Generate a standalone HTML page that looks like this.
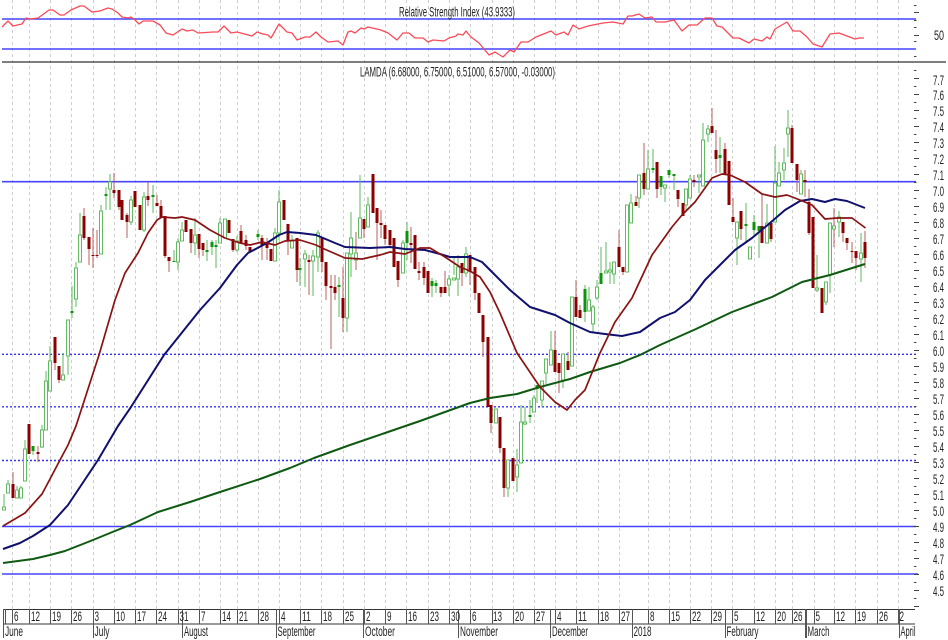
<!DOCTYPE html>
<html lang="en">
<head>
<meta charset="utf-8">
<title>LAMDA chart</title>
<style>
html,body{margin:0;padding:0;background:#fff;width:948px;height:640px;overflow:hidden}
svg{display:block}
text{font-family:"Liberation Sans",Arial,sans-serif;font-size:13.5px;fill:#222}
</style>
</head>
<body>
<svg xmlns="http://www.w3.org/2000/svg" width="948" height="640" viewBox="0 0 948 640">
<rect width="948" height="640" fill="#fff"/>

<!-- vertical dashed grid -->
<path fill="none" stroke="#cfcfcf" stroke-width="1" stroke-dasharray="3 3" d="M12.5 0V609M29.5 0V609M50.5 0V609M71.5 0V609M93.5 0V609M114.5 0V609M135.5 0V609M156.5 0V609M178.5 0V609M199.5 0V609M220.5 0V609M237.5 0V609M258.5 0V609M279.5 0V609M300.5 0V609M321.5 0V609M343.5 0V609M364.5 0V609M385.5 0V609M406.5 0V609M428.5 0V609M449.5 0V609M470.5 0V609M492.5 0V609M513.5 0V609M534.5 0V609M555.5 0V609M576.5 0V609M598.5 0V609M619.5 0V609M648.5 0V609M669.5 0V609M690.5 0V609M711.5 0V609M732.5 0V609M754.5 0V609M775.5 0V609M792.5 0V609M814.5 0V609M834.5 0V609M855.5 0V609M877.5 0V609M898.5 0V609"/>

<!-- horizontal levels -->
<path fill="none" stroke="#4444ff" stroke-width="1.6" d="M2 19H916M2 49H916M2 181.7H916M2 526.5H916M2 574H918"/>
<path fill="none" stroke="#3030ff" stroke-width="1.4" stroke-dasharray="2 2" d="M2 354.3H916M2 406.8H916M2 460.5H916"/>
<path fill="none" stroke="#333" stroke-width="1.3" d="M2 62H946"/>

<!-- RSI -->
<polyline fill="none" stroke="#fb4a58" stroke-width="1.3" stroke-linejoin="round" points="2,27 8,21 13,26 22,24 26,18 30,19 38,18 45,13 49,10 53,10 60,15 64,15 71,10 80,6 84,6 92,12 100,11 108,8 112,9 118,13 122,17 128,18 131,17 135,20 139,24 143,21 153,21 160,25 166,33 173,35 182,29 187,31 193,30 198,33 213,32 218,32 224,26 231,33 237,32 252,36 257,32 263,34 268,35 271,38 279,24 287,32 292,33 297,40 305,37 310,37 316,32 321,37 328,42 338,41 343,45 348,32 351,31 355,33 361,28 364,29 368,27 381,30 388,33 397,40 403,33 409,33 415,38 423,38 428,42 433,40 444,41 449,38 456,36 458,34 463,35 466,31 471,37 479,43 489,55 495,52 503,57 510,50 514,52 521,42 528,42 536,37 551,31 556,35 564,32 568,35 573,25 579,29 588,26 603,23 613,22 623,24 628,16 632,16 639,14 645,18 652,17 656,22 665,22 674,20 682,31 689,25 697,25 705,18 712,18 717,26 722,27 733,38 739,38 749,43 754,39 762,41 767,37 770,39 775,29 787,22 793,31 800,31 807,37 813,44 822,47 830,34 839,33 855,39 859,38 864,38"/>

<!-- wicks -->
<path fill="none" stroke="#5cb85c" stroke-width="1" d="M4 494V510M8 480V493M17 486V498M21 486V498M25 440V481M33 446V455M42 425V448M46 371V430M50 346V391M63 353V380M68 320V375M72 286V318M76 262V307M80 213V262M101 205V254M106 187V210M110 174V210M131 196V225M144 192V232M153 185V213M174 250V262M178 238V270M182 222V241M195 218V255M207 240V261M212 240V255M216 240V268M220 218V243M225 219V238M237 236V252M258 230V240M275 228V261M279 190V240M292 235V248M300 258V286M305 250V287M313 250V296M318 230V272M339 277V317M347 253V332M351 212V277M360 175V238M368 197V227M403 240V273M407 222V260M432 278V297M436 280V293M449 275V296M454 258V275M458 255V296M466 247V277M508 460V497M517 449V492M521 405V463M525 407V425M530 400V423M534 395V412M537 385V403M542 381V407M546 359V384M551 331V365M563 354V388M572 297V366M585 285V322M589 287V311M593 305V332M597 280V300M601 247V284M606 242V273M610 262V284M614 262V284M627 205V272M631 194V223M639 175V208M648 150V189M653 149V173M661 176V195M665 185V202M669 170V178M674 175V190M686 189V210M690 175V198M699 175V193M703 123V186M708 125V142M720 137V173M737 222V265M746 203V243M754 215V235M759 226V258M767 204V243M775 146V222M779 162V186M784 148V180M788 110V157M801 170V194M817 255V292M826 282V305M830 223V293M839 211V237M861 233V282"/>
<path fill="none" stroke="#bb6060" stroke-width="1" d="M13 472V498M38 446V462M55 337V370M59 366V383M84 208V240M89 237V265M93 228V268M97 230V258M114 173V198M119 190V210M127 213V238M148 182V206M157 195V206M161 200V218M165 216V258M169 257V272M191 229V253M199 234V258M203 243V256M233 239V252M241 225V243M246 235V250M262 235V260M267 238V260M288 224V255M297 238V282M309 255V295M322 238V272M326 262V300M331 275V349M335 275V300M343 267V332M356 232V270M364 219V238M377 208V260M381 210V238M385 225V245M390 230V247M398 261V287M411 227V263M415 235V269M419 262V280M424 262V285M428 271V293M441 287V297M445 271V293M462 263V286M470 255V285M475 267V300M483 315V357M491 405V433M500 417V453M504 448V497M555 331V372M559 363V393M568 352V370M576 280V317M580 305V318M619 230V267M623 267V275M636 196V206M644 143V195M657 162V198M678 190V207M683 203V216M694 175V187M712 108V133M716 130V173M725 143V174M733 198V222M741 211V240M762 195V243M771 223V242M792 125V163M797 164V192M805 170V197M809 189V235M834 208V247M843 222V242M847 238V250M852 242V263M856 251V270M865 231V268"/>

<!-- hollow bodies -->
<path fill="#fff" stroke="#62bb62" stroke-width="1" d="M2.5 507h3V510h-3zM6.5 484h3V493h-3zM15.5 490h3V498h-3zM19.5 488h3V498h-3zM23.5 449h3V481h-3zM40.5 430h3V447h-3zM44.5 381h3V430h-3zM48.5 361h3V391h-3zM61.5 375h3V380h-3zM66.5 320h3V356h-3zM74.5 268h3V299h-3zM78.5 235h3V262h-3zM99.5 211h3V254h-3zM108.5 182h3V189h-3zM129.5 200h3V222h-3zM142.5 197h3V230h-3zM176.5 242h3V262h-3zM180.5 230h3V241h-3zM193.5 235h3V243h-3zM218.5 223h3V243h-3zM223.5 219h3V238h-3zM235.5 241h3V250h-3zM273.5 233h3V261h-3zM277.5 202h3V233h-3zM290.5 241h3V248h-3zM303.5 254h3V259h-3zM311.5 256h3V261h-3zM316.5 233h3V257h-3zM345.5 253h3V318h-3zM349.5 238h3V254h-3zM354.5 253h3V260h-3zM358.5 218h3V238h-3zM366.5 205h3V227h-3zM401.5 243h3V273h-3zM447.5 279h3V285h-3zM452.5 278h3V280h-3zM456.5 267h3V279h-3zM464.5 254h3V273h-3zM494.5 409h3V423h-3zM506.5 460h3V488h-3zM515.5 465h3V477h-3zM519.5 422h3V463h-3zM523.5 422h3V424h-3zM532.5 398h3V412h-3zM540.5 381h3V400h-3zM544.5 359h3V373h-3zM549.5 350h3V365h-3zM561.5 354h3V380h-3zM570.5 297h3V366h-3zM587.5 300h3V311h-3zM591.5 307h3V324h-3zM595.5 287h3V298h-3zM604.5 271h3V273h-3zM608.5 270h3V272h-3zM612.5 262h3V274h-3zM625.5 205h3V272h-3zM629.5 203h3V223h-3zM637.5 175h3V198h-3zM646.5 169h3V189h-3zM663.5 185h3V188h-3zM684.5 189h3V205h-3zM688.5 179h3V198h-3zM697.5 175h3V177h-3zM701.5 140h3V186h-3zM706.5 129h3V134h-3zM735.5 222h3V238h-3zM748.5 247h3V259h-3zM765.5 223h3V243h-3zM773.5 183h3V222h-3zM777.5 173h3V186h-3zM782.5 163h3V170h-3zM786.5 128h3V134h-3zM799.5 174h3V194h-3zM815.5 288h3V290h-3zM824.5 282h3V302h-3zM828.5 223h3V275h-3zM832.5 226h3V229h-3zM837.5 217h3V222h-3zM859.5 253h3V259h-3z"/>

<!-- filled green bodies -->
<path fill="none" stroke="#0a960a" stroke-width="3" d="M33 446V451M72 311V313M106 194V196M153 195V197M174 261V262M207 250V252M212 242V247M216 245V247M258 234V237M300 268V270M339 285V287M407 231V243M432 281V286M436 283V286M530 415V417M537 385V389M585 289V312M601 273V284M653 168V170M661 176V187M669 170V175M674 174V176M720 155V158M746 224V226M754 222V230M759 226V231"/>

<!-- red bodies -->
<path fill="none" stroke="#8b0000" stroke-width="3" d="M13 484V498M29 424V454M38 452V454M55 337V363M59 366V380M84 216V238M89 237V249M93 255V256M97 255V256M114 190V193M119 190V207M122 200V220M127 215V222M135 191V207M140 205V230M148 196V200M157 203V206M161 206V218M165 216V256M169 257V261M186 220V232M191 229V243M199 234V249M203 243V250M229 220V233M233 239V250M241 231V243M246 240V246M250 247V252M262 238V246M267 242V248M271 249V261M284 200V220M288 224V240M297 238V270M309 260V262M322 238V262M326 262V286M331 286V288M335 287V293M343 298V318M364 219V229M373 174V213M377 208V223M381 223V225M385 225V239M390 230V245M394 238V267M398 261V280M411 243V245M415 235V269M419 271V273M424 267V278M428 271V293M441 287V293M445 287V293M462 263V273M470 255V272M475 267V293M479 293V313M483 315V342M488 337V407M491 405V423M500 417V448M504 448V488M513 458V481M555 350V372M559 363V373M568 361V370M576 297V317M580 310V318M619 247V267M623 267V272M636 202V206M644 173V189M657 162V189M678 190V199M683 203V216M694 180V182M712 126V133M716 150V159M725 149V174M729 161V205M733 217V222M741 211V229M762 226V243M771 223V239M792 128V163M797 164V180M805 180V182M809 202V233M813 217V288M822 288V313M843 222V233M847 238V243M852 251V252M856 251V258M865 242V258"/>

<!-- moving averages -->
<polyline fill="none" stroke="#0f5a12" stroke-width="2" stroke-linejoin="round" points="3,563 33,559 50,555 65,551 93,540 110,533 130,525 158,512 190,502 220,492 260,479 290,468 314,458 350,445 385,433 420,421 470,403 490,398 517,394 540,387 570,379 590,372 620,363 640,355 660,345 696,329 732,312 772,297 802,282 830,275 865,264"/>
<polyline fill="none" stroke="#10106e" stroke-width="2" stroke-linejoin="round" points="3,549 20,543 33,536 50,525 68,505 80,487 98,460 118,426 131,407 164,355 200,310 220,288 237,265 248,253 267,243 279,235 287,232 300,233 316,235 335,243 345,247 370,248 390,247 405,249 425,250 440,254 450,257 470,257 482,262 495,275 510,290 530,307 555,315 570,323 590,332 605,334 622,336 640,332 660,318 675,312 690,300 705,280 720,265 735,250 752,238 770,223 785,210 800,201 812,199 825,202 835,199 847,201 865,208"/>
<polyline fill="none" stroke="#8b1212" stroke-width="1.7" stroke-linejoin="round" points="3,526 25,513 42,494 50,479 60,460 68,445 76,426 99,355 115,300 125,273 138,253 148,233 157,220 162,217 175,218 182,217 195,220 210,230 225,238 240,243 250,245 262,242 275,245 285,241 300,240 316,245 322,248 345,258 362,259 380,255 390,252 405,254 420,248 430,248 445,257 460,267 470,271 480,277 490,292 500,313 517,353 540,387 555,402 567,410 575,400 585,390 600,353 615,322 632,298 652,255 672,227 682,215 695,202 705,188 712,178 722,174 730,175 745,182 762,194 775,197 787,195 800,200 812,205 825,219 837,218 852,218 865.5,228"/>

<!-- price scale ticks -->
<path fill="none" stroke="#444" stroke-width="5" stroke-dasharray="1 15" d="M916.5 78V608"/>
<path fill="none" stroke="#444" stroke-width="2.5" stroke-dasharray="1 15" d="M915.2 70V600"/>
<path fill="none" stroke="#444" stroke-width="1" d="M914 12.5h5M914 35.5h5M914 5.5h2.5M914 20.5h2.5M914 27.5h2.5M914 41.5h2.5M914 56.5h2.5"/>

<!-- date axis -->
<path fill="none" stroke="#333" stroke-width="1.1" d="M3 609.5H915M3 624H915"/>
<path fill="none" stroke="#555" stroke-width="1" d="M12.5 609V624M29.5 609V624M50.5 609V624M71.5 609V624M93.5 609V624M114.5 609V624M135.5 609V624M156.5 609V624M178.5 609V624M199.5 609V624M220.5 609V624M237.5 609V624M258.5 609V624M279.5 609V624M300.5 609V624M321.5 609V624M343.5 609V624M364.5 609V624M385.5 609V624M406.5 609V624M428.5 609V624M449.5 609V624M470.5 609V624M492.5 609V624M513.5 609V624M534.5 609V624M555.5 609V624M576.5 609V624M598.5 609V624M619.5 609V624M648.5 609V624M669.5 609V624M690.5 609V624M711.5 609V624M732.5 609V624M754.5 609V624M775.5 609V624M792.5 609V624M814.5 609V624M834.5 609V624M855.5 609V624M877.5 609V624M898.5 609V624M3.5 609V638M5.5 609V624M93.5 624V638M182.5 609V638M276.5 609V638M363.5 609V638M458.5 609V638M550.5 609V638M632.5 609V638M725.5 609V638M805.5 609V638M806.5 609V638M899.5 609V638"/>

<!-- titles -->
<text x="399" y="16.5" textLength="116" lengthAdjust="spacingAndGlyphs">Relative Strength Index (43.9333)</text>
<text x="360" y="76.5" textLength="195" lengthAdjust="spacingAndGlyphs">LAMDA (6.68000, 6.75000, 6.51000, 6.57000, -0.03000)</text>

<!-- RSI label -->
<text x="934" y="40" textLength="10" lengthAdjust="spacingAndGlyphs">50</text>

<!-- price labels -->
<g>
<text x="933" y="85" textLength="11" lengthAdjust="spacingAndGlyphs">7.7</text>
<text x="933" y="100" textLength="11" lengthAdjust="spacingAndGlyphs">7.6</text>
<text x="933" y="116" textLength="11" lengthAdjust="spacingAndGlyphs">7.5</text>
<text x="933" y="132" textLength="11" lengthAdjust="spacingAndGlyphs">7.4</text>
<text x="933" y="148" textLength="11" lengthAdjust="spacingAndGlyphs">7.3</text>
<text x="933" y="164" textLength="11" lengthAdjust="spacingAndGlyphs">7.2</text>
<text x="933" y="180" textLength="11" lengthAdjust="spacingAndGlyphs">7.1</text>
<text x="933" y="196" textLength="11" lengthAdjust="spacingAndGlyphs">7.0</text>
<text x="933" y="212" textLength="11" lengthAdjust="spacingAndGlyphs">6.9</text>
<text x="933" y="228" textLength="11" lengthAdjust="spacingAndGlyphs">6.8</text>
<text x="933" y="244" textLength="11" lengthAdjust="spacingAndGlyphs">6.7</text>
<text x="933" y="260" textLength="11" lengthAdjust="spacingAndGlyphs">6.6</text>
<text x="933" y="276" textLength="11" lengthAdjust="spacingAndGlyphs">6.5</text>
<text x="933" y="292" textLength="11" lengthAdjust="spacingAndGlyphs">6.4</text>
<text x="933" y="308" textLength="11" lengthAdjust="spacingAndGlyphs">6.3</text>
<text x="933" y="324" textLength="11" lengthAdjust="spacingAndGlyphs">6.2</text>
<text x="933" y="340" textLength="11" lengthAdjust="spacingAndGlyphs">6.1</text>
<text x="933" y="356" textLength="11" lengthAdjust="spacingAndGlyphs">6.0</text>
<text x="933" y="372" textLength="11" lengthAdjust="spacingAndGlyphs">5.9</text>
<text x="933" y="388" textLength="11" lengthAdjust="spacingAndGlyphs">5.8</text>
<text x="933" y="404" textLength="11" lengthAdjust="spacingAndGlyphs">5.7</text>
<text x="933" y="420" textLength="11" lengthAdjust="spacingAndGlyphs">5.6</text>
<text x="933" y="436" textLength="11" lengthAdjust="spacingAndGlyphs">5.5</text>
<text x="933" y="452" textLength="11" lengthAdjust="spacingAndGlyphs">5.4</text>
<text x="933" y="468" textLength="11" lengthAdjust="spacingAndGlyphs">5.3</text>
<text x="933" y="484" textLength="11" lengthAdjust="spacingAndGlyphs">5.2</text>
<text x="933" y="500" textLength="11" lengthAdjust="spacingAndGlyphs">5.1</text>
<text x="933" y="516" textLength="11" lengthAdjust="spacingAndGlyphs">5.0</text>
<text x="933" y="532" textLength="11" lengthAdjust="spacingAndGlyphs">4.9</text>
<text x="933" y="548" textLength="11" lengthAdjust="spacingAndGlyphs">4.8</text>
<text x="933" y="564" textLength="11" lengthAdjust="spacingAndGlyphs">4.7</text>
<text x="933" y="580" textLength="11" lengthAdjust="spacingAndGlyphs">4.6</text>
<text x="933" y="596" textLength="11" lengthAdjust="spacingAndGlyphs">4.5</text>
</g>

<!-- day labels -->
<g>
<text x="14" y="621" textLength="4.5" lengthAdjust="spacingAndGlyphs">6</text>
<text x="31" y="621" textLength="9" lengthAdjust="spacingAndGlyphs">12</text>
<text x="52" y="621" textLength="9" lengthAdjust="spacingAndGlyphs">19</text>
<text x="73" y="621" textLength="9" lengthAdjust="spacingAndGlyphs">26</text>
<text x="94.5" y="621" textLength="4.5" lengthAdjust="spacingAndGlyphs">3</text>
<text x="116" y="621" textLength="9" lengthAdjust="spacingAndGlyphs">10</text>
<text x="137" y="621" textLength="9" lengthAdjust="spacingAndGlyphs">17</text>
<text x="158" y="621" textLength="9" lengthAdjust="spacingAndGlyphs">24</text>
<text x="179.5" y="621" textLength="9" lengthAdjust="spacingAndGlyphs">31</text>
<text x="201" y="621" textLength="4.5" lengthAdjust="spacingAndGlyphs">7</text>
<text x="222" y="621" textLength="9" lengthAdjust="spacingAndGlyphs">14</text>
<text x="239" y="621" textLength="9" lengthAdjust="spacingAndGlyphs">21</text>
<text x="260" y="621" textLength="9" lengthAdjust="spacingAndGlyphs">28</text>
<text x="281" y="621" textLength="4.5" lengthAdjust="spacingAndGlyphs">4</text>
<text x="302" y="621" textLength="9" lengthAdjust="spacingAndGlyphs">11</text>
<text x="323" y="621" textLength="9" lengthAdjust="spacingAndGlyphs">18</text>
<text x="345" y="621" textLength="9" lengthAdjust="spacingAndGlyphs">25</text>
<text x="366" y="621" textLength="4.5" lengthAdjust="spacingAndGlyphs">2</text>
<text x="387" y="621" textLength="4.5" lengthAdjust="spacingAndGlyphs">9</text>
<text x="408" y="621" textLength="9" lengthAdjust="spacingAndGlyphs">16</text>
<text x="430" y="621" textLength="9" lengthAdjust="spacingAndGlyphs">23</text>
<text x="451" y="621" textLength="9" lengthAdjust="spacingAndGlyphs">30</text>
<text x="472" y="621" textLength="4.5" lengthAdjust="spacingAndGlyphs">6</text>
<text x="493" y="621" textLength="9" lengthAdjust="spacingAndGlyphs">13</text>
<text x="515" y="621" textLength="9" lengthAdjust="spacingAndGlyphs">20</text>
<text x="536" y="621" textLength="9" lengthAdjust="spacingAndGlyphs">27</text>
<text x="557" y="621" textLength="4.5" lengthAdjust="spacingAndGlyphs">4</text>
<text x="578" y="621" textLength="9" lengthAdjust="spacingAndGlyphs">11</text>
<text x="600" y="621" textLength="9" lengthAdjust="spacingAndGlyphs">18</text>
<text x="621" y="621" textLength="9" lengthAdjust="spacingAndGlyphs">27</text>
<text x="650" y="621" textLength="4.5" lengthAdjust="spacingAndGlyphs">8</text>
<text x="671" y="621" textLength="9" lengthAdjust="spacingAndGlyphs">15</text>
<text x="692" y="621" textLength="9" lengthAdjust="spacingAndGlyphs">22</text>
<text x="713" y="621" textLength="9" lengthAdjust="spacingAndGlyphs">29</text>
<text x="734" y="621" textLength="4.5" lengthAdjust="spacingAndGlyphs">5</text>
<text x="756" y="621" textLength="9" lengthAdjust="spacingAndGlyphs">12</text>
<text x="777" y="621" textLength="9" lengthAdjust="spacingAndGlyphs">20</text>
<text x="793.5" y="621" textLength="9" lengthAdjust="spacingAndGlyphs">26</text>
<text x="815.5" y="621" textLength="4.5" lengthAdjust="spacingAndGlyphs">5</text>
<text x="836" y="621" textLength="9" lengthAdjust="spacingAndGlyphs">12</text>
<text x="857" y="621" textLength="9" lengthAdjust="spacingAndGlyphs">19</text>
<text x="879" y="621" textLength="9" lengthAdjust="spacingAndGlyphs">26</text>
<text x="899.5" y="621" textLength="4.5" lengthAdjust="spacingAndGlyphs">2</text>
</g>

<!-- month labels -->
<g>
<text x="5" y="636" textLength="18" lengthAdjust="spacingAndGlyphs">June</text>
<text x="94.5" y="636" textLength="15" lengthAdjust="spacingAndGlyphs">July</text>
<text x="184" y="636" textLength="24" lengthAdjust="spacingAndGlyphs">August</text>
<text x="277.5" y="636" textLength="38" lengthAdjust="spacingAndGlyphs">September</text>
<text x="365" y="636" textLength="30" lengthAdjust="spacingAndGlyphs">October</text>
<text x="460" y="636" textLength="38" lengthAdjust="spacingAndGlyphs">November</text>
<text x="552" y="636" textLength="36" lengthAdjust="spacingAndGlyphs">December</text>
<text x="633.5" y="636" textLength="18" lengthAdjust="spacingAndGlyphs">2018</text>
<text x="726.5" y="636" textLength="32" lengthAdjust="spacingAndGlyphs">February</text>
<text x="807.5" y="636" textLength="22" lengthAdjust="spacingAndGlyphs">March</text>
<text x="900.5" y="636" textLength="15" lengthAdjust="spacingAndGlyphs">April</text>
</g>
</svg>
</body>
</html>
